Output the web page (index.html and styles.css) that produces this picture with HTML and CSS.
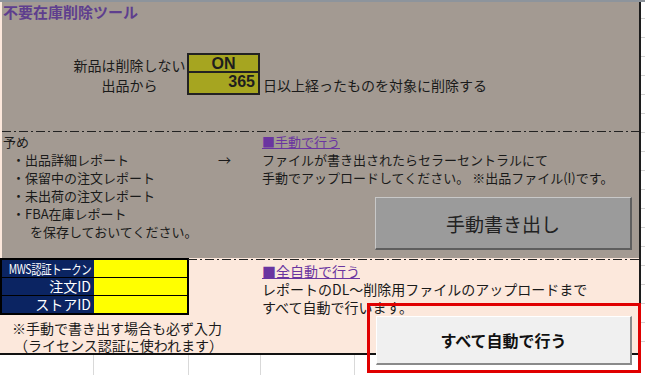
FILE: index.html
```html
<!DOCTYPE html>
<html lang="ja">
<head>
    <meta charset="UTF-8">
    <meta name="viewport" content="width=device-width, initial-scale=1.0">
    <title>不要在庫削除ツール</title>
    <link rel="stylesheet" href="styles.css">
</head>
<body>
    <div class="sheet">
        <div class="manual-area">
            <div class="title">不要在庫削除ツール</div>

            <div class="settings">
                <div class="labels">
                    <div>新品は削除しない</div>
                    <div>出品から</div>
                </div>
                <div class="value-box">
                    <div class="value on">ON</div>
                    <div class="value days">365</div>
                </div>
                <div class="suffix">日以上経ったものを対象に削除する</div>
            </div>

            <div class="dash-line"></div>

            <div class="columns">
                <div class="col-left">
                    <div>予め</div>
                    <div class="item arrow-row"><span>・出品詳細レポート</span><span class="arrow">→</span></div>
                    <div class="item">・保留中の注文レポート</div>
                    <div class="item">・未出荷の注文レポート</div>
                    <div class="item">・FBA在庫レポート</div>
                    <div class="save">を保存しておいてください。</div>
                </div>
                <div class="col-right">
                    <div><a class="link">■手動で行う</a></div>
                    <div>ファイルが書き出されたらセラーセントラルにて</div>
                    <div>手動でアップロードしてください。 ※出品ファイル(I)です。</div>
                    <button class="btn-export">手動書き出し</button>
                </div>
            </div>
        </div>

        <div class="auto-area">
            <div class="auth">
                <table class="auth-table">
                    <tr><th><span class="shrink">MWS認証トークン</span></th><td></td></tr>
                    <tr><th>注文ID</th><td></td></tr>
                    <tr><th>ストアID</th><td></td></tr>
                </table>
                <div class="note">※手動で書き出す場合も必ず入力</div>
                <div class="note note-sub">（ライセンス認証に使われます）</div>
            </div>
            <div class="auto-right">
                <div class="dash-line"></div>
                <div class="auto-text">
                    <div><a class="link">■全自動で行う</a></div>
                    <div>レポートのDL～削除用ファイルのアップロードまで</div>
                    <div>すべて自動で行います。</div>
                </div>
            </div>
        </div>
    </div>

    <div class="auto-frame">
        <button class="btn-auto">すべて自動で行う</button>
    </div>
</body>
</html>
```

FILE: styles.css
```css
* {
    box-sizing: border-box;
}
body {
    margin: 0;
    width: 645px;
    height: 375px;
    overflow: hidden;
    position: relative;
    border-top: 2px solid #8d949c;
    font-family: "Noto Sans CJK JP", sans-serif;
    color: #1a1a1a;
    background-color: #fff;
    background-image:
        linear-gradient(to right, transparent 93px, #d9d9d9 93px, #d9d9d9 94px, transparent 94px,
            transparent 188px, #d9d9d9 188px, #d9d9d9 189px, transparent 189px,
            transparent 260px, #d9d9d9 260px, #d9d9d9 261px, transparent 261px,
            transparent 354px, #d9d9d9 354px, #d9d9d9 355px, transparent 355px),
        repeating-linear-gradient(to bottom, transparent 0 18px, #d4d4d4 18px 19px);
    background-size: 100% 100%, 100% 353px;
    background-repeat: no-repeat;
}
.sheet {
    width: 641px;
    height: 353px;
    background: #fce8dc;
    border-right: 2px solid #1c1c1c;
    border-bottom: 2px solid #111;
}
.manual-area {
    margin-left: 2px;
    height: 256px;
    background: #a39a92;
}
.title {
    padding-left: 1px;
    font-size: 15px;
    font-weight: bold;
    line-height: 20px;
    color: #5e3e8e;
}
.settings {
    display: flex;
    margin-top: 31px;
    margin-left: 70px;
    font-size: 14px;
}
.labels {
    width: 115px;
    padding-top: 2px;
    text-align: center;
}
.labels div {
    height: 20px;
    line-height: 20px;
}
.value-box {
    width: 73px;
    border: 2px solid #222;
    background: #a6a520;
}
.value {
    height: 18px;
    line-height: 18px;
    font-weight: bold;
    font-family: "Liberation Sans", sans-serif;
    font-size: 16px;
    color: #1e1e1e;
}
.value.on {
    text-align: center;
    border-bottom: 2px solid #222;
}
.value.days {
    text-align: right;
    padding-right: 3px;
}
.suffix {
    align-self: flex-end;
    padding-left: 3px;
    line-height: 20px;
}
.dash-line {
    height: 1px;
    background: repeating-linear-gradient(to right, #222 0 9px, transparent 9px 12px, #222 12px 14px, transparent 14px 17px);
}
.settings + .dash-line {
    margin-top: 36px;
}
.columns {
    display: flex;
    padding-top: 1px;
    font-size: 13px;
    line-height: 18px;
}
.col-left {
    width: 260px;
    padding-left: 1px;
}
.item {
    padding-left: 9px;
}
.arrow-row {
    display: flex;
}
.arrow {
    margin-left: auto;
    margin-right: 31px;
}
.save {
    padding-left: 27px;
}
.col-right {
    flex: 1;
    padding-right: 7px;
}
.link {
    color: #6a35a0;
    text-decoration: underline;
}
.btn-export {
    display: block;
    width: 257px;
    height: 53px;
    margin: 10px 0 0 auto;
    background: #9b9b9b;
    border-style: solid;
    border-width: 1px 2px 2px 1px;
    border-color: #c8c8c8 #5e5e5e #5e5e5e #c8c8c8;
    font-family: "Noto Sans CJK JP", sans-serif;
    font-size: 19px;
    color: #222;
    padding: 0;
}
.auto-area {
    display: flex;
    height: 95px;
}
.auth {
    width: 188px;
}
.auth-table {
    width: 189px;
    border-collapse: collapse;
    border: 2px solid #000;
    font-size: 14px;
}
.auth-table tr + tr th,
.auth-table tr + tr td {
    border-top: 1px solid #000;
}
.auth-table th {
    width: 93px;
    height: 17px;
    padding: 0 3px 0 0;
    background: #0b2462;
    color: #fff;
    font-weight: normal;
    text-align: right;
    line-height: 17px;
    white-space: nowrap;
}
.shrink {
    display: inline-block;
    font-size: 13px;
    letter-spacing: -0.5px;
    transform: scaleX(0.8);
    transform-origin: right center;
    margin-left: -30px;
}
.auth-table td {
    padding: 0;
    background: #ffff00;
}
.note {
    font-size: 14px;
    line-height: 17px;
    padding-left: 12px;
    white-space: nowrap;
}
.note:first-of-type {
    margin-top: 5px;
}
.note-sub {
    padding-left: 14px;
}
.auto-right {
    flex: 1;
    padding-top: 1px;
}
.auto-text {
    padding: 2px 0 0 74px;
    font-size: 14px;
    line-height: 18px;
    white-space: nowrap;
}
.auto-frame {
    position: absolute;
    left: 367px;
    top: 301px;
    width: 274px;
    height: 70px;
    border: 3px solid #e00000;
    padding: 10px 0 0 6px;
}
.btn-auto {
    display: block;
    width: 256px;
    height: 49px;
    background: #f0f0f0;
    border-style: solid;
    border-width: 1px 2px 2px 1px;
    border-color: #fff #8a8a8a #8a8a8a #fff;
    font-family: "Noto Sans CJK JP", sans-serif;
    font-size: 16px;
    font-weight: bold;
    color: #111;
    padding: 0;
}
```
